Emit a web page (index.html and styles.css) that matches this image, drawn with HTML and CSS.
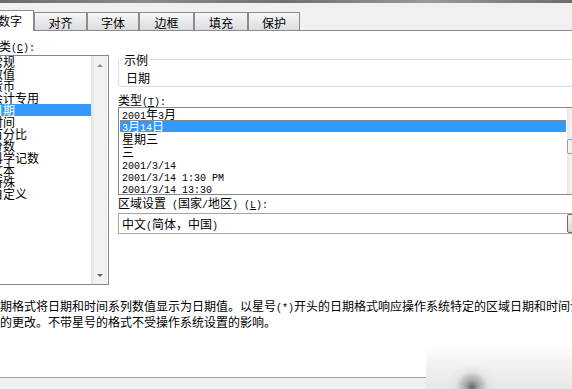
FILE: index.html
```html
<!DOCTYPE html>
<html lang="zh-CN">
<head>
    <meta charset="UTF-8">
    <title>设置单元格格式</title>
    <link rel="stylesheet" href="styles.css">
</head>
<body>
<div class="dialog">
    <div class="topline"></div>
    <div class="tabbar">
        <div class="tab active">数字</div>
        <div class="tab">对齐</div>
        <div class="tab">字体</div>
        <div class="tab">边框</div>
        <div class="tab">填充</div>
        <div class="tab">保护</div>
    </div>
    <div class="main">
        <div class="cols">
            <div class="left">
                <div class="label">类<span class="m">(<u>C</u>):</span></div>
                <div class="catbox">
                    <ul class="catlist">
                        <li>常规</li>
                        <li>数值</li>
                        <li>货币</li>
                        <li>会计专用</li>
                        <li class="sel">日期</li>
                        <li>时间</li>
                        <li>百分比</li>
                        <li>分数</li>
                        <li>科学记数</li>
                        <li>文本</li>
                        <li>特殊</li>
                        <li>自定义</li>
                    </ul>
                    <div class="vscroll">
                        <span class="arrow up"></span>
                        <span class="arrow down"></span>
                    </div>
                </div>
            </div>
            <div class="right">
                <fieldset class="sample">
                    <legend>示例</legend>
                    <div class="sample-text">日期</div>
                </fieldset>
                <div class="label type-label">类型<span class="m">(<u>T</u>):</span></div>
                <div class="typebox">
                    <ul class="typelist">
                        <li><span class="m">2001</span>年<span class="m">3</span>月</li>
                        <li class="sel"><span class="m">3</span>月<span class="m">14</span>日</li>
                        <li class="tall">星期三</li>
                        <li class="tall">三</li>
                        <li><span class="m">2001/3/14</span></li>
                        <li><span class="m">2001/3/14 1:30 PM</span></li>
                        <li><span class="m">2001/3/14 13:30</span></li>
                    </ul>
                    <div class="vscroll2"><div class="thumb"></div></div>
                </div>
                <div class="label region-label">区域设置<span class="m"> (</span>国家<span class="m">/</span>地区<span class="m">) (<u>L</u>):</span></div>
                <div class="combo">
                    <span class="combo-text">中文<span class="m">(</span>简体，中国<span class="m">)</span></span>
                    <div class="drop"></div>
                </div>
            </div>
        </div>
        <div class="desc">
            <div>日期格式将日期和时间系列数值显示为日期值。以星号<span class="m">(*)</span>开头的日期格式响应操作系统特定的区域日期和时间设</div>
            <div>置的更改。不带星号的格式不受操作系统设置的影响。</div>
        </div>
    </div>
    <div class="footer"></div>
    <div class="blur"></div>
</div>
</body>
</html>
```

FILE: styles.css
```css
body { margin: 0; font: 12px "Noto Sans CJK SC", sans-serif; color: #000; background: #fff; }
ul { list-style: none; margin: 0; padding: 0; }
.m { font-family: "Liberation Mono", monospace; font-size: 10px; }

.dialog { width: 572px; height: 389px; position: relative; overflow: hidden; background: #fff; }
.topline { height: 3px; background: linear-gradient(90deg, #6a6a6a, #8c8c8c 25%, #707070 50%, #9a9a9a 75%, #6c6c6c); }

.tabbar { height: 27px; background: #f0f0f0; border-bottom: 1px solid #898c95; display: flex; align-items: flex-end; }
.tab { box-sizing: border-box; height: 18px; border: 1px solid #898c95; border-bottom: none; background: linear-gradient(#f6f6f6, #dcdcdc); text-align: center; line-height: 17px; padding-top: 1px; }
.tab:nth-child(2) { width: 53px; }
.tab:nth-child(3) { width: 52px; }
.tab:nth-child(4) { width: 55px; }
.tab:nth-child(5) { width: 54px; }
.tab:nth-child(6) { width: 52px; }
.tab.active { width: 46px; height: 21px; margin-left: -12px; margin-bottom: -1px; background: #fff; line-height: 16px; padding-top: 2px; text-align: left; padding-left: 9px; }

.main { height: 338px; }
.cols { display: flex; margin-top: 8px; }
.label { line-height: 13px; height: 13px; white-space: nowrap; }

.left { width: 109px; flex-shrink: 0; }
.left .label { margin-left: -1px; margin-bottom: 3px; }
.catbox { box-sizing: border-box; height: 230px; border: 1px solid #828790; border-left: none; display: flex; }
.catlist { width: 91px; overflow: hidden; }
.catlist li { height: 12px; line-height: 12px; text-indent: -9px; white-space: nowrap; }
.catlist li.sel { background: #3399ff; color: #fff; }
.vscroll { width: 16px; border-left: 1px solid #e4e4e4; background: linear-gradient(90deg, #e6e6e6, #f2f2f2 3px, #f2f2f2 13px, #e8e8e8); display: flex; flex-direction: column; justify-content: space-between; align-items: center; padding: 8px 0 7px; box-sizing: border-box; }
.arrow { width: 0; height: 0; border-left: 3px solid transparent; border-right: 3px solid transparent; }
.arrow.up { border-bottom: 3px solid #8a8a8a; }
.arrow.down { border-top: 3px solid #606060; }

.right { width: 467px; flex-shrink: 0; margin-left: 9px; padding-top: 14px; }
.sample { margin: 0; padding: 0 4px 2px; border: 1px solid #d5dfe5; border-radius: 3px; }
.sample legend { padding: 0 1px; line-height: 13px; }
.sample-text { padding: 5px 0 0 3px; line-height: 13px; }
.type-label { margin-top: 6px; margin-bottom: 1px; }

.typebox { box-sizing: border-box; height: 88px; border: 1px solid #828790; display: flex; }
.typelist { width: 448px; overflow: hidden; }
.typelist li { height: 12px; line-height: 12px; padding-left: 3px; white-space: nowrap; }
.typelist li.tall { height: 13px; line-height: 13px; }
.typelist li.sel { margin: 0 1px; padding-left: 1px; border: 1px dotted #d07a30; line-height: 10px; height: 10px; background: #3399ff; color: #fff; }
.vscroll2 { width: 17px; background: linear-gradient(90deg, #e6e6e6, #f0f0f0 3px, #f0f0f0 14px, #e8e8e8); }
.thumb { margin-top: 31px; height: 15px; box-sizing: border-box; border: 1px solid #9a9a9a; border-radius: 2px; background: linear-gradient(90deg, #f6f6f6, #dedede); }

.region-label { margin-top: 1px; margin-bottom: 4px; }
.combo { box-sizing: border-box; height: 21px; border: 1px solid #a5a5a5; display: flex; justify-content: space-between; }
.combo-text { padding-left: 3px; line-height: 19px; white-space: nowrap; }
.drop { width: 17px; box-sizing: border-box; border: 1px solid #707070; border-radius: 2px; background: linear-gradient(#f4f4f4, #d6d6d6); }

.desc { margin-top: 14px; margin-left: -12px; line-height: 13px; white-space: nowrap; }

.footer { height: 19px; border-top: 1px solid #a0a0a8; background: #f0f0f0; }

.blur { position: absolute; left: 426px; top: 345px; width: 146px; height: 44px;
    background: radial-gradient(circle at 46px 42px, rgba(80,80,80,0.85) 0, rgba(120,120,120,0.55) 7px, rgba(200,200,200,0.2) 16px, rgba(255,255,255,0) 24px),
                linear-gradient(rgba(255,255,255,0.9), #f6f6f6 30%, #e6e6e6); }
```
